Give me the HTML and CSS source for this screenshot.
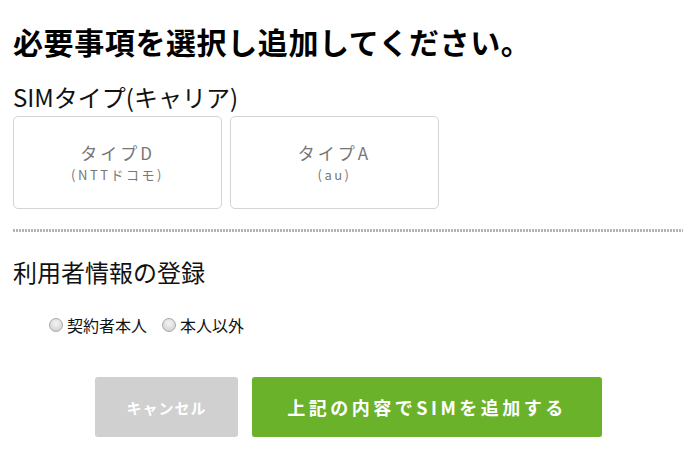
FILE: index.html
```html
<!DOCTYPE html>
<html lang="ja">
<head>
<meta charset="utf-8">
<link rel="stylesheet" href="styles.css">
</head>
<body>
<div class="page">
  <h1 class="title">必要事項を選択し追加してください。</h1>
  <h2 class="section-title sim-title">SIMタイプ(キャリア)</h2>
  <div class="cards">
    <div class="card">
      <div class="card-main">タイプD</div>
      <div class="card-sub">(NTTドコモ)</div>
    </div>
    <div class="card">
      <div class="card-main">タイプA</div>
      <div class="card-sub">(au)</div>
    </div>
  </div>
  <div class="separator"></div>
  <h2 class="section-title user-title">利用者情報の登録</h2>
  <div class="radios">
    <label class="radio"><span class="radio-dot"></span>契約者本人</label>
    <label class="radio"><span class="radio-dot"></span>本人以外</label>
  </div>
  <div class="buttons">
    <div class="btn btn-cancel">キャンセル</div>
    <div class="btn btn-add">上記の内容でSIMを追加する</div>
  </div>
</div>
</body>
</html>
```
FILE: styles.css
```css
html, body {
  margin: 0;
  padding: 0;
  background: #fff;
}
body {
  font-family: "Noto Sans CJK JP", "Noto Sans", sans-serif;
  color: #111;
}
.page {
  padding-left: 13px;
  width: 670px;
}
.title {
  margin: 23px 0 0 0;
  font-size: 30px;
  line-height: 37px;
  font-weight: 700;
  letter-spacing: 0.6px;
  color: #000;
}
.section-title {
  margin: 0;
  font-size: 24px;
  line-height: 30px;
  font-weight: 400;
  color: #111;
}
.sim-title {
  margin-top: 22px;
}
.cards {
  display: flex;
  gap: 8px;
  margin-top: 4px;
}
.card {
  width: 207px;
  height: 91px;
  border: 1px solid #d4d4d4;
  border-radius: 5px;
  display: flex;
  flex-direction: column;
  align-items: center;
  justify-content: center;
  color: #777;
}
.card-main {
  font-size: 17px;
  line-height: 24px;
  letter-spacing: 3px;
}
.card-sub {
  font-size: 13px;
  line-height: 19px;
  letter-spacing: 2.5px;
}
.separator {
  margin-top: 20px;
  height: 3px;
  width: 670px;
  background: repeating-linear-gradient(to right, #b4b4b4 0, #b4b4b4 2px, transparent 2px, transparent 3px);
}
.user-title {
  margin-top: 25px;
}
.radios {
  display: flex;
  gap: 15px;
  margin-top: 28px;
  padding-left: 36px;
  font-size: 16px;
  line-height: 20px;
  color: #111;
}
.radio {
  display: flex;
  align-items: center;
  gap: 4px;
}
.radio-dot {
  width: 12px;
  height: 12px;
  border-radius: 50%;
  border: 1px solid #a8a8a8;
  background: radial-gradient(circle at 50% 35%, #f4f4f4 0, #dcdcdc 60%, #c8c8c8 100%);
}
.buttons {
  display: flex;
  gap: 14px;
  margin-top: 42px;
  padding-left: 82px;
}
.btn {
  height: 60px;
  border-radius: 3px;
  display: flex;
  align-items: center;
  justify-content: center;
  color: #fff;
  font-weight: 700;
}
.btn-cancel {
  width: 143px;
  background: #d0d0d0;
  font-size: 15px;
  letter-spacing: 1px;
}
.btn-add {
  width: 350px;
  background: #6ab22a;
  font-size: 18px;
  letter-spacing: 3.5px;
  box-shadow: 0 1px 1px rgba(0,0,0,0.15);
}
```
